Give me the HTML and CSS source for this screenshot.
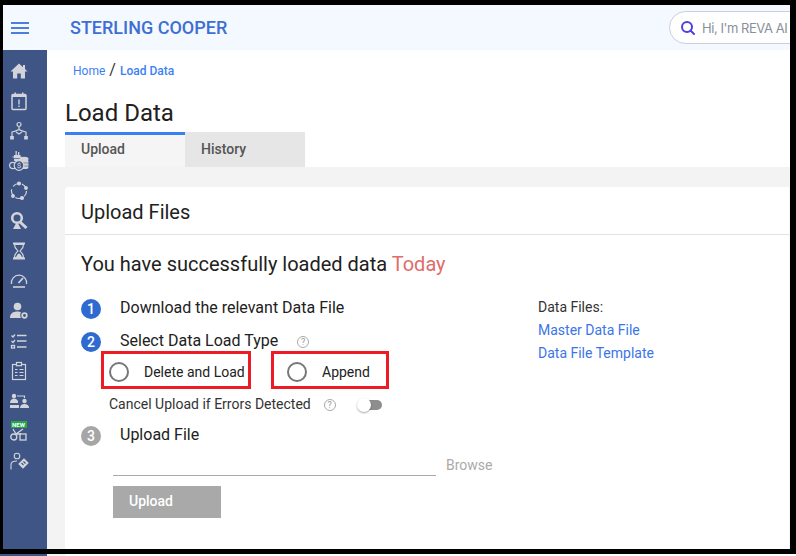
FILE: index.html
```html
<!DOCTYPE html>
<html lang="en">
<head>
<meta charset="utf-8">
<title>Load Data</title>
<link rel="stylesheet" href="styles.css">
</head>
<body>
<div class="frame">
  <header class="topbar">
    <div class="burger"><i></i><i></i><i></i></div>
    <div class="brand">STERLING COOPER</div>
    <div class="search">
      <svg width="16" height="16" viewBox="0 0 16 16"><circle cx="7" cy="7" r="5" fill="none" stroke="#4b3fe0" stroke-width="2"/><path d="M10.500 10.500L14 14" stroke="#4b3fe0" stroke-width="2" stroke-linecap="round"/></svg>
      <span>Hi, I'm REVA AI</span>
    </div>
  </header>
  <div class="body">
    <nav class="side">
      <svg class="ico" viewBox="0 0 20 20"><path d="M10 2.500L1.500 10.500h2.500v7h4.200v-5h3.600v5h4.200v-7h2.500l-2.500-2.400V4h-2v2.200z" fill="#d2d4da"/></svg>
      <svg class="ico" viewBox="0 0 20 20"><rect x="3" y="3.500" width="14" height="15" rx="1" fill="none" stroke="#d2d4da" stroke-width="1.500"/><path d="M3 3.500h14v2.500H3zM5.500 1.500H7v3H5.500zM13 1.500h1.500v3H13zM9.300 8.500h1.400v5H9.300zM9.300 14.500h1.400V16H9.300z" fill="#d2d4da"/></svg>
      <svg class="ico" viewBox="0 0 20 20" fill="none" stroke="#d2d4da" stroke-width="1.200"><circle cx="10" cy="3.500" r="2"/><path d="M10 5.500v4M3 16v-5c3-.500 5-1.500 7-2.500 2 1 4 2 7 2.500v5M7 11l3 2 3-2"/><path d="M1.800 15.500h2.400v2.400H1.800zM15.800 15.500h2.400v2.400h-2.400z" fill="#d2d4da"/></svg>
      <svg class="ico" viewBox="0 0 20 20"><path d="M5 4h6.500v6H5z" fill="#d2d4da"/><path d="M6.500 0h1.300v11H6.500zM9 1h1.300v10H9zM3.500 5.500h9v1h-9z" fill="#d2d4da"/><path d="M5 7.500h6.500" stroke="#3f5585" stroke-width=".7"/><ellipse cx="15" cy="8" rx="4.500" ry="2.200" fill="#d2d4da"/><rect x="10.500" y="8.500" width="9" height="9.500" rx="2" fill="#d2d4da"/><path d="M11 12h9M11 15h9" stroke="#3f5585" stroke-width=".6"/><circle cx="3.800" cy="14.500" r="3.200" fill="#3f5585" stroke="#d2d4da" stroke-width="1.200"/><circle cx="10" cy="14.500" r="4.800" fill="#3f5585" stroke="#d2d4da" stroke-width="1.200"/><text x="10" y="17.300" font-size="8" fill="#d2d4da" text-anchor="middle" font-family="Roboto">$</text></svg>
      <svg class="ico" viewBox="0 0 20 20" fill="none" stroke="#d2d4da" stroke-width="1.200"><circle cx="10" cy="10" r="7.500" stroke-dasharray="6 3.500"/><circle cx="10" cy="2.500" r="1.400" fill="#d2d4da"/><circle cx="17" cy="7" r="1.300" fill="#d2d4da"/><circle cx="13" cy="17" r="1.500" fill="#d2d4da"/><circle cx="4" cy="15" r="1.300" fill="#d2d4da"/></svg>
      <svg class="ico" viewBox="0 0 20 20"><circle cx="8" cy="7" r="4.800" fill="none" stroke="#d2d4da" stroke-width="2.600"/><path d="M11 11l6.500 6" stroke="#d2d4da" stroke-width="3"/><path d="M8 10.500l4 7.500H4z" fill="#d2d4da"/></svg>
      <svg class="ico" viewBox="0 0 20 20"><path d="M4 1.500h12v2H4zM4 16.500h12v2H4z" fill="#d2d4da"/><path d="M5.500 3.500h9c0 4-3 5.500-3.500 6.500.5 1 3.500 2.500 3.500 6.500h-9c0-4 3-5.500 3.500-6.500-.5-1-3.500-2.500-3.500-6.500z" fill="none" stroke="#d2d4da" stroke-width="1.200"/><path d="M7 16c1-2 2-3.500 3-3.500s2 1.500 3 3.500z" fill="#d2d4da"/></svg>
      <svg class="ico" viewBox="0 0 20 20" fill="none" stroke="#d2d4da" stroke-width="1.300"><path d="M2.500 13a7.600 7.600 0 1 1 15 0"/><path d="M9.500 12l4.500-5" stroke-width="1.800"/><path d="M4 16h12" stroke-width="1.600"/></svg>
      <svg class="ico" viewBox="0 0 20 20"><circle cx="8.500" cy="5.500" r="3.800" fill="#d2d4da"/><path d="M1 17c0-4.500 3-6.500 7.500-6.500 1.500 0 2.500.2 3.500.7-1 1.300-1 3.800 0 5.800z" fill="#d2d4da"/><circle cx="15.500" cy="14.500" r="2.300" fill="none" stroke="#d2d4da" stroke-width="1.700"/></svg>
      <svg class="ico" viewBox="0 0 20 20" fill="none" stroke="#d2d4da" stroke-width="1.300"><path d="M2.500 4.500l1.500 1.500 2-2.500M2.500 10l1.500 1.500 2-2.500"/><rect x="2.500" y="14.500" width="3" height="2.500"/><path d="M8 4.500h9.500M8 10h9.500M8 16h9.500"/></svg>
      <svg class="ico" viewBox="0 0 20 20" fill="none" stroke="#d2d4da" stroke-width="1.200"><rect x="3.500" y="3.500" width="13" height="15"/><rect x="7.500" y="1.500" width="5" height="3.200" fill="#3f5585"/><path d="M6 8.500h2.500M10.500 8.500h4M6 11.500h2.500M10.500 11.500h4M6 14.500h2.500M10.500 14.500h4"/></svg>
      <svg class="ico" viewBox="0 0 20 20"><circle cx="5" cy="5" r="2.200" fill="#d2d4da"/><circle cx="15.500" cy="10" r="2.200" fill="#d2d4da"/><path d="M1 12c0-3 2-4.500 4-4.500s4 1.500 4 3v1.500zM11 17c0-2.500 2-4 4.500-4s4.500 1.500 4.500 3.500v.5zM1 14h9v3H1z" fill="#d2d4da"/><path d="M8 5h7.500v2" fill="none" stroke="#d2d4da" stroke-width="1.200"/></svg>
      <div class="ico-new">
        <span class="new">NEW</span>
        <svg width="17" height="16" viewBox="0 0 17 16" fill="none" stroke="#d2d4da" stroke-width="1.300"><circle cx="3.800" cy="12" r="3"/><rect x="10" y="9" width="6" height="6"/><path d="M3 4l3 5M13 4l-7 5M6 9h5"/></svg>
      </div>
      <svg class="ico" viewBox="0 0 20 20" fill="none" stroke="#d2d4da" stroke-width="1.100"><circle cx="8" cy="5" r="2.800"/><path d="M2 18.500v-5c0-2.500 2-3.500 6-3.500"/><path d="M10 13l5-5 4 4-5 5z" fill="#d2d4da"/><path d="M12.500 12l2 2M14.500 10.500l2 2" stroke="#3f5585"/></svg>
    </nav>
    <main class="main">
      <div class="head">
        <div class="crumb"><a>Home</a><span class="sep">/</span><b>Load Data</b></div>
        <h1>Load Data</h1>
        <div class="tabs"><div class="tab on">Upload</div><div class="tab">History</div></div>
      </div>
      <div class="panel">
        <section class="card">
          <h2>Upload Files</h2>
          <div class="content">
            <h3>You have successfully loaded data <em>Today</em></h3>
            <div class="cols">
              <div class="left">
                <div class="step s1"><span class="num blue">1</span>Download the relevant Data File</div>
                <div class="step s2"><span class="num blue">2</span>Select Data Load Type<span class="help big">?</span></div>
                <div class="opts">
                  <label class="opt o1"><i class="radio"></i>Delete and Load</label>
                  <label class="opt o2"><i class="radio"></i>Append</label>
                </div>
                <div class="cancel"><span>Cancel Upload if Errors Detected</span><span class="help">?</span><i class="toggle"></i></div>
                <div class="step s3"><span class="num gray">3</span>Upload File</div>
                <div class="file"><div class="line"></div><span>Browse</span></div>
                <div class="btn">Upload</div>
              </div>
              <aside class="files">
                <p>Data Files:</p>
                <a>Master Data File</a>
                <a>Data File Template</a>
              </aside>
            </div>
          </div>
        </section>
      </div>
    </main>
  </div>
</div>
<div class="strip"><span class="sb"></span><span class="gr"></span></div>
</body>
</html>
```
FILE: styles.css
```css
* { box-sizing: border-box; }
html, body { margin: 0; height: 556px; overflow: hidden; background: #000; font-family: Roboto, sans-serif; }
.frame { height: 544px; margin: 5px 6px 0 3px; display: flex; flex-direction: column; overflow: hidden; background: #fff; }
.strip { height: 2px; margin-top: 5px; background: #fff; display: flex; }
.strip .sb { width: 47px; background: #3f5585; }
.strip .gr { width: 18px; background: #f3f3f3; }
.topbar { height: 45px; background: #f4f8ff; display: flex; align-items: center; flex: none; }
.burger { width: 44px; display: flex; flex-direction: column; align-items: center; gap: 3px; padding-right: 10px; }
.burger i { width: 18px; height: 2px; background: #4f7ddb; display: block; }
.brand { margin-left: 23px; font-size: 18px; font-weight: 500; color: #3e6fd2; line-height: 20px; }
.search { margin-left: auto; margin-right: -60px; width: 181px; height: 33px; border: 1px solid #ccd; border-radius: 17px; background: #fff; display: flex; align-items: center; padding-left: 10px; gap: 6px; font-size: 13px; color: #8a8f99; font-family: Inter, sans-serif; letter-spacing: -.45px; white-space: nowrap; }
.body { flex: 1; display: flex; min-height: 0; }
.side { width: 44px; background: #3f5585; display: flex; flex-direction: column; align-items: center; padding: 11px 13px 0 0; gap: 10px; flex: none; }
.ico { width: 20px; height: 20px; display: block; flex: none; }
.ico-new { width: 20px; height: 20px; position: relative; display: flex; justify-content: center; align-items: flex-end; flex: none; }
.new { position: absolute; top: 0; left: 2px; width: 16px; height: 7px; background: #25a84a; color: #fff; font-size: 6px; font-weight: 700; line-height: 7px; text-align: center; z-index: 1; }
.main { flex: 1; min-width: 0; display: flex; flex-direction: column; }
.head { height: 117px; padding-left: 18px; flex: none; display: flex; flex-direction: column; }
.crumb { margin: 12px 0 0 8px; height: 18px; font-size: 12px; line-height: 18px; display: flex; align-items: center; color: #3b7ff5; }
.crumb .sep { font-size: 16px; color: #333; margin: -2px 4px 0 4px; }
.crumb b { font-weight: 500; }
h1 { margin: 19px 0 0; font-size: 24px; font-weight: 400; line-height: 28px; color: #212121; }
.tabs { display: flex; margin-top: 5px; }
.tab { width: 120px; height: 35px; background: #e6e6e6; border-top: 3px solid #e6e6e6; padding-left: 16px; font-size: 14px; font-weight: 500; line-height: 28px; color: #555; }
.tab.on { background: #f5f5f5; border-top-color: #3b7ff5; }
.panel { flex: 1; background: #f3f3f3; padding: 20px 1px 0 18px; min-height: 0; }
.card { background: #fff; border-radius: 4px 0 0 0; height: 100%; }
h2 { margin: 0; height: 48px; border-bottom: 1px solid #e3e3e3; padding-left: 16px; font-size: 20px; font-weight: 400; line-height: 50px; color: #212121; }
.content { padding: 0 0 0 16px; }
h3 { margin: 0; padding-top: 16px; font-size: 20px; font-weight: 400; line-height: 26px; color: #212121; }
h3 em { font-style: normal; color: #e06c6c; }
.cols { display: flex; }
.left { width: 457px; flex: none; }
.step { display: flex; align-items: center; font-size: 16px; line-height: 20px; color: #212121; }
.s1 { margin-top: 21px; }
.s2 { margin-top: 13px; }
.s3 { margin-top: 12px; }
.num { width: 20px; height: 20px; border-radius: 50%; margin: 1px 19px -1px 0; color: #fff; font-size: 14px; font-weight: 500; line-height: 20px; text-align: center; flex: none; }
.num.blue { background: #2f6ad0; }
.num.gray { background: #a6a6a6; }
.help { width: 12px; height: 12px; border: 1px solid #aaa; border-radius: 50%; font-size: 9px; line-height: 10px; text-align: center; color: #999; display: inline-block; flex: none; }
.help.big { margin-left: 19px; margin-top: 2px; }
.opts { display: flex; margin: 0 0 0 20px; gap: 20px; }
.opt { height: 38px; border: 3px solid #ed1c24; display: flex; align-items: center; padding-top: 4px; font-size: 14px; color: #212121; }
.o1 { width: 150px; padding-left: 5px; }
.o2 { width: 118px; padding-left: 13px; }
.radio { width: 20px; height: 20px; border: 2px solid #777; border-radius: 50%; margin-right: 15px; flex: none; }
.cancel { display: flex; align-items: center; margin: 6px 0 0 28px; font-size: 14px; line-height: 18px; color: #333; }
.cancel .help { margin-left: 13px; margin-top: 1px; }
.toggle { height: 10px; width: 22px; margin: 2px 0 0 24px; background: #8e8e8e; border-radius: 5px; position: relative; display: block; }
.toggle::after { content: ""; position: absolute; left: -3px; top: -2px; width: 14px; height: 14px; border-radius: 50%; background: #fff; box-shadow: 0 1px 2px rgba(0,0,0,.35); }
.file { display: flex; align-items: center; margin: 9px 0 0 32px; font-size: 14px; color: #aaa; height: 22px; }
.line { width: 323px; height: 22px; border-bottom: 1px solid #aaa; }
.file span { margin-left: 10px; }
.btn { margin: 10px 0 0 32px; width: 108px; height: 32px; background: #a9a9a9; color: #fff; font-size: 14px; font-weight: 500; line-height: 30px; padding-left: 16px; }
.files { padding-top: 19px; font-size: 14px; line-height: 23px; display: flex; flex-direction: column; color: #3b75e8; }
.files p { margin: 0; color: #333; }
```
